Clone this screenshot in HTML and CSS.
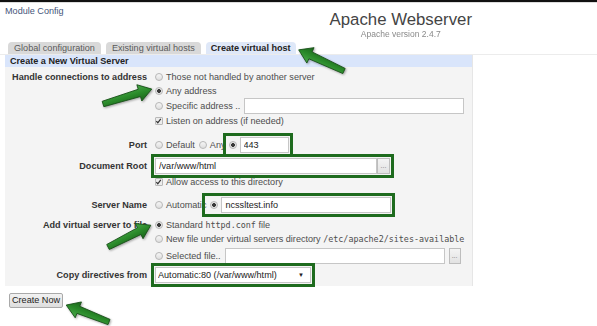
FILE: index.html
```html
<!DOCTYPE html>
<html lang="en">
<head>
  <meta charset="UTF-8" />
  <title>Apache Webserver - Create virtual host</title>
  <link rel="stylesheet" href="styles.css">
</head>
<body>
  <div class="topline"></div>

  <header class="header">
    <a class="module-link" href="#">Module Config</a>
    <div class="title-block">
      <h1 class="title">Apache Webserver</h1>
      <div class="subtitle">Apache version 2.4.7</div>
    </div>
  </header>

  <nav class="tabs">
    <span class="tab">Global configuration</span>
    <span class="tab">Existing virtual hosts</span>
    <span class="tab active">Create virtual host</span>
  </nav>

  <main class="main">
    <form class="panel">
      <div class="panel-head">Create a New Virtual Server</div>
      <table class="form-table">
        <tr class="r-addr">
          <th>Handle connections to address</th>
          <td>
            <div class="line"><input type="radio" name="addr"><span>Those not handled by another server</span></div>
            <div class="line"><input type="radio" name="addr" checked><span>Any address</span></div>
            <div class="line tall"><input type="radio" name="addr"><span>Specific address ..</span><input class="text w-addr" type="text"></div>
            <div class="line"><span class="check"><svg width="8" height="8" viewBox="0 0 8 8"><path d="M1.5 4.2 L3.2 6 L6.6 1.6" fill="none" stroke="#333" stroke-width="1.4"/></svg></span><span>Listen on address (if needed)</span></div>
          </td>
        </tr>
        <tr class="r-port">
          <th>Port</th>
          <td>
            <div class="line tall">
              <input type="radio" name="port"><span>Default</span>
              <input class="after" type="radio" name="port"><span>Any</span>
              <span class="hl hl-port"><input type="radio" name="port" checked><input class="text w-port" type="text" value="443"></span>
            </div>
          </td>
        </tr>
        <tr class="r-root">
          <th>Document Root</th>
          <td>
            <div class="line tall">
              <span class="hl"><input class="text w-root" type="text" value="/var/www/html"><button class="dots" type="button">...</button></span>
            </div>
            <div class="line mid"><span class="check"><svg width="8" height="8" viewBox="0 0 8 8"><path d="M1.5 4.2 L3.2 6 L6.6 1.6" fill="none" stroke="#333" stroke-width="1.4"/></svg></span><span>Allow access to this directory</span></div>
          </td>
        </tr>
        <tr class="r-name">
          <th>Server Name</th>
          <td>
            <div class="line tall">
              <input type="radio" name="sname"><span>Automatic</span>
              <span class="hl hl-name"><input type="radio" name="sname" checked><input class="text w-name" type="text" value="ncssltest.info"></span>
            </div>
          </td>
        </tr>
        <tr class="r-file">
          <th>Add virtual server to file</th>
          <td>
            <div class="line"><input type="radio" name="vfile" checked><span>Standard <code>httpd.conf</code> file</span></div>
            <div class="line"><input type="radio" name="vfile"><span>New file under virtual servers directory <code>/etc/apache2/sites-available</code></span></div>
            <div class="line sel"><input type="radio" name="vfile"><span>Selected file..</span><input class="text w-file" type="text"><button class="dots" type="button">...</button></div>
          </td>
        </tr>
        <tr class="r-copy">
          <th>Copy directives from</th>
          <td>
            <div class="line tall">
              <span class="hl select">
                <select>
                  <option>Automatic:80 (/var/www/html)</option>
                </select>
                <span class="caret">&#9660;</span>
              </span>
            </div>
          </td>
        </tr>
      </table>
    </form>
    <div class="actions">
      <button class="create" type="button">Create Now</button>
    </div>
  </main>

  <svg class="arrows" width="597" height="326" viewBox="0 0 597 326">
    <defs>
      <linearGradient id="arrowFill" x1="0" y1="0" x2="0" y2="1">
        <stop offset="0" stop-color="#4aa84a"/>
        <stop offset="0.5" stop-color="#2a8a2a"/>
        <stop offset="1" stop-color="#1a641a"/>
      </linearGradient>
    </defs>
    <polygon points="0,-2.8 38,-3.8 38,-8.5 51,0 38,8.5 38,3.8 0,2.8" transform="translate(103 104) rotate(-17)"/>
    <polygon points="0,-2.8 37,-3.8 37,-8.5 50,0 37,8.5 37,3.8 0,2.8" transform="translate(344 71) rotate(205)"/>
    <polygon points="0,-2.8 35,-3.8 35,-8.5 48,0 35,8.5 35,3.8 0,2.8" transform="translate(108 247) rotate(-27)"/>
    <polygon points="0,-2.8 33,-3.8 33,-8.5 46,0 33,8.5 33,3.8 0,2.8" transform="translate(109 322) rotate(201.6)"/>
  </svg>
</body>
</html>
```

FILE: styles.css
```css
:root {
  --text: #333333;
  --text-soft: #4d4d4d;
  --panel: #f4f4f4;
  --panel-head: #d9e5fb;
  --tab: #d9d9d9;
  --tab-active: #dfe8f8;
  --field-border: #c6c6c6;
  --green: #1e6b1e;
}

*, *::before, *::after {
  box-sizing: border-box;
}

html {
  height: 100%;
}

body {
  margin: 0;
  position: relative;
  min-height: 100%;
  border-top: 2px solid #111;
  font-family: "Liberation Sans", Arial, sans-serif;
  font-size: 9.1px;
  color: var(--text);
  background: #fff;
}

.topline {
  border-top: 1px solid #dcdcdc;
}

/* header */

.header {
  display: flex;
  align-items: flex-start;
  height: 39px;
  padding: 0 5px;
}

.module-link {
  margin-top: 3px;
  line-height: 11px;
  color: #45557a;
  text-decoration: none;
}

.title-block {
  margin-left: auto;
  margin-right: 120px;
  padding-top: 8px;
  text-align: center;
}

.title {
  margin: 0;
  font-size: 16.8px;
  font-weight: normal;
  line-height: 17px;
  color: #444;
}

.subtitle {
  margin-top: 1px;
  font-size: 8.5px;
  line-height: 10px;
  color: #8a8a8a;
  filter: blur(0.6px);
}

/* tabs */

.tabs {
  display: flex;
  gap: 5px;
  height: 12px;
  padding-left: 8px;
}

.tab {
  padding: 0 6px;
  line-height: 12px;
  background: var(--tab);
  color: #5a5a5a;
  border-radius: 4px 4px 0 0;
}

.tab.active {
  background: var(--tab-active);
  color: #222;
  font-weight: bold;
  padding: 0 5px;
}

/* panel */

.main {
  border-top: 1px solid #ececec;
}

.panel {
  width: 468px;
  margin: 0 0 0 5px;
  background: var(--panel);
  border-right: 1px solid #e6e6e6;
}

.panel-head {
  height: 12px;
  line-height: 12px;
  padding-left: 5px;
  background: var(--panel-head);
  font-weight: bold;
  color: #222;
}

.form-table {
  width: 100%;
  border-collapse: collapse;
  border-spacing: 0;
}

.form-table th {
  width: 148px;
  padding: 0 6px 0 0;
  text-align: right;
  vertical-align: top;
  font-weight: bold;
  line-height: 14px;
  white-space: nowrap;
  color: var(--text);
}

.form-table td {
  padding: 0 0 0 2px;
  vertical-align: top;
  color: var(--text-soft);
}

.r-addr th, .r-addr td { padding-top: 3px; padding-bottom: 3px; }
.r-port th, .r-port td { padding-top: 6px; padding-bottom: 2px; }
.r-root th, .r-root td { padding-top: 3px; padding-bottom: 3px; }
.r-name th, .r-name td { padding-top: 5px; padding-bottom: 4px; }
.r-file th, .r-file td { padding-top: 1px; padding-bottom: 1px; }
.r-copy th, .r-copy td { padding-top: 1px; padding-bottom: 3px; }

.r-port th, .r-root th, .r-name th, .r-copy th {
  line-height: 16px;
}

.line {
  display: flex;
  align-items: center;
  height: 14px;
  white-space: nowrap;
}

.line.tall { height: 16px; }
.line.mid { height: 15px; }
.line.sel { height: 19px; }

input[type="radio"] {
  appearance: none;
  flex: none;
  width: 8px;
  height: 8px;
  margin: 0 3px 0 0;
  border: 1px solid #b8b8b8;
  border-radius: 50%;
  background: linear-gradient(#f6f6f6, #dedede);
}

input[type="radio"]:checked {
  background: radial-gradient(circle, #3a3a3a 0 1.6px, #e4e4e4 2.2px);
}

input.after {
  margin-left: 4px;
}

.check {
  display: inline-flex;
  flex: none;
  width: 8px;
  height: 8px;
  margin-right: 3px;
  border: 1px solid #b8b8b8;
  border-radius: 1px;
  background: #ececec;
}

.check svg {
  margin: -1px 0 0 -1px;
}

code {
  font-family: "DejaVu Sans Mono", "Liberation Mono", monospace;
  font-size: 8.4px;
}

.text {
  height: 16px;
  margin: 0;
  padding: 0 3px;
  border: 1px solid var(--field-border);
  background: #fff;
  font-family: inherit;
  font-size: 9.1px;
  color: #222;
}

.w-addr { width: 220px; margin-left: 4px; }
.w-port { width: 49px; }
.w-root { width: 222px; }
.w-name { width: 170px; }
.w-file { width: 220px; margin-left: 4px; }

.dots {
  width: 13px;
  height: 16px;
  margin: 0;
  padding: 0;
  border: 1px solid #bdbdbd;
  background: linear-gradient(#f4f4f4, #e2e2e2);
  font-family: inherit;
  font-size: 7px;
  line-height: 12px;
  color: #777;
}

.w-file + .dots {
  width: 12px;
  margin-left: 4px;
}

/* green highlight frames */

.hl {
  display: inline-flex;
  align-items: center;
  outline: 3px solid var(--green);
  outline-offset: 1px;
}

.hl-port {
  margin-left: 1px;
  padding-left: 2px;
}

.hl-name {
  margin-left: 0;
  padding-left: 4px;
}

.select {
  position: relative;
}

.select select {
  appearance: none;
  width: 156px;
  height: 16px;
  margin: 0;
  padding: 0 12px 0 2px;
  border: 1px solid var(--field-border);
  border-radius: 0;
  background: #fff;
  font-family: inherit;
  font-size: 9.1px;
  color: #222;
}

.caret {
  position: absolute;
  right: 7px;
  top: 4px;
  font-size: 6px;
  line-height: 8px;
  color: #222;
}

/* actions */

.actions {
  padding: 7px 0 0 9px;
}

.create {
  height: 15px;
  padding: 0 2px;
  border: 1px solid #a9a9a9;
  border-radius: 2px;
  background: linear-gradient(#f2f2f2, #dedede);
  font-family: inherit;
  font-size: 9.1px;
  line-height: 13px;
  color: #222;
}

/* annotation arrows */

.arrows {
  position: absolute;
  top: -2px;
  left: 0;
  pointer-events: none;
  filter: drop-shadow(1px 1px 1px rgba(0, 0, 0, 0.35));
}

.arrows polygon {
  fill: url(#arrowFill);
  stroke: #164f16;
  stroke-width: 0.8;
  stroke-linejoin: round;
}
```
